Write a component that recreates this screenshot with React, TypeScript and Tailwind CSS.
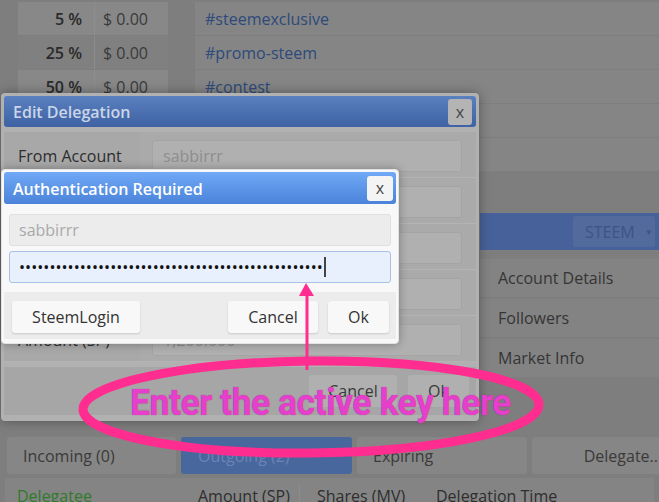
const font = "font-['Open_Sans','Liberation_Sans',sans-serif]"

const rates = [
  { pct: "5 %", value: "$ 0.00" },
  { pct: "25 %", value: "$ 0.00" },
  { pct: "50 %", value: "$ 0.00" },
  { pct: "75 %", value: "$ 0.00" },
  { pct: "100 %", value: "$ 0.00" }
]

const tags = ["#steemexclusive", "#promo-steem", "#contest", "", ""]

const menu = ["Account Details", "Followers", "Market Info"]

function Page() {
  return (
    <div className="flex flex-col h-full">
      {/* top: rates table and tag list */}
      <div className="flex shrink-0 h-[212px] pt-[2px]">
        <div className="w-[175px] pl-[18px] pr-[7px] flex flex-col gap-[1px]">
          {rates.map((r, i) => (
            <div
              key={r.pct}
              className={`flex h-[33px] shrink-0 items-center ${i % 2 === 0 ? "bg-[#888888]" : "bg-[#808080]"}`}>
              <div className="w-[77px] pr-[12px] text-right font-semibold text-[16px] text-[#2a2a2a] border-r border-[#8d8d8d] h-full flex items-center justify-end">
                {r.pct}
              </div>
              <div className="pl-[8px] text-[16px] text-[#3a3a3a]">{r.value}</div>
            </div>
          ))}
        </div>
        <div className="flex-1 pl-[20px] flex flex-col gap-[1px]">
          {tags.map((t, i) => (
            <div
              key={i}
              className="h-[33px] shrink-0 bg-[#858585] flex items-center pl-[10px] text-[16px] text-[#2d4a7a]">
              {t}
            </div>
          ))}
        </div>
      </div>

      {/* middle: right hand panel */}
      <div className="flex shrink-0 h-[225px]">
        <div className="w-[480px]" />
        <div className="flex-1 flex flex-col">
          <div className="mt-[1px] shrink-0 h-[37px] bg-[#47629a] flex items-center justify-end pr-[4px]">
            <div className="h-[31px] w-[82px] rounded-[3px] bg-[#536a9d] flex items-center pl-[12px] gap-[10px] text-[16px] text-[#3c5585]">
              STEEM <span className="text-[8px]">▼</span>
            </div>
          </div>
          <div className="mt-[9px] flex flex-col gap-[2px]">
            {menu.map((m) => (
              <div
                key={m}
                className="h-[38px] shrink-0 bg-[#838383] flex items-center pl-[18px] text-[16px] text-[#353535]">
                {m}
              </div>
            ))}
          </div>
        </div>
      </div>

      {/* tabs */}
      <div className="flex shrink-0 gap-[5px] pl-[7px] h-[37px]">
        <div className="w-[169px] rounded-[3px] bg-[#868686] flex items-center pl-[16px] pt-[1px] text-[16px] text-[#3a3a3a]">
          Incoming (0)
        </div>
        <div className="w-[171px] rounded-[3px] bg-[#48679c] flex items-center pl-[17px] pt-[1px] text-[16px] text-[#6c84b6]">
          Outgoing (2)
        </div>
        <div className="w-[170px] rounded-[3px] bg-[#868686] flex items-center pl-[16px] pt-[1px] text-[16px] text-[#3a3a3a]">
          Expiring
        </div>
        <div className="flex-1 rounded-l-[3px] bg-[#868686] flex items-center justify-end pr-[1px] pt-[1px] text-[16px] text-[#3a3a3a] whitespace-nowrap overflow-hidden">
          Delegate..
        </div>
      </div>

      {/* table header */}
      <div className="mt-[4px] mx-[5px] flex-1 min-h-0 overflow-hidden bg-[#848484] flex items-start pt-[6px] text-[16px] text-[#2e2e2e]">
        <div className="w-[188px] pl-[12px] text-[#2f7b2b]">Delegatee</div>
        <div className="w-[107px] pl-[5px] border-r border-[#8c8c8c]">Amount (SP)</div>
        <div className="w-[119px] pl-[17px]">Shares (MV)</div>
        <div className="flex-1 pl-[17px]">Delegation Time</div>
      </div>
    </div>
  )
}

function EditDelegation() {
  const rows = [
    { label: "From Account", value: "sabbirrr" },
    { label: "To Account", value: "" },
    { label: "", value: "" },
    { label: "", value: "" },
    { label: "Amount (SP)", value: "1,200.000" }
  ]
  return (
    <div className="absolute left-[1px] top-[93px] w-[478px] h-[328px] rounded-[4px] bg-[#b1b1b1] p-[3px] shadow-[0_0_12px_rgba(0,0,0,0.35)] flex flex-col">
      <div className="h-[31px] shrink-0 rounded-[3px] bg-linear-to-b from-[#5b80bf] to-[#3e62a3] flex items-center justify-between pl-[9px] pr-[4px]">
        <span className="pt-[1px] text-[16px] font-semibold text-[#cbd5e8]">Edit Delegation</span>
        <div className="w-[24px] h-[26px] rounded-[3px] bg-[#b4b4b4] flex items-center justify-center text-[16px] text-[#444]">
          x
        </div>
      </div>
      <div className="mt-[5px] flex flex-col">
        {rows.map((r, i) => (
          <div key={i} className="h-[46px] shrink-0 flex border-b border-[#b4b4b4] bg-[#aaaaaa]">
            <div className="w-[136px] flex items-center pl-[14px] pt-[3px] text-[16px] text-[#2d2d2d] bg-[#a8a8a8]">
              {r.label}
            </div>
            <div className="flex-1 pl-[12px] pr-[14px] pt-[8px]">
              <div className="h-[32px] rounded-[3px] bg-[#b0b0b0] border border-[#a4a4a4] flex items-center pl-[10px] text-[16px] text-[#8d8d8d]">
                {r.value}
              </div>
            </div>
          </div>
        ))}
      </div>
      <div className="mt-[5px] h-[48px] shrink-0 bg-[#a6a6a6] flex items-center justify-end gap-[11px] pr-[7px]">
        <div className="w-[88px] h-[32px] rounded-[3px] bg-[#b0b0b0] flex items-center justify-center text-[16px] text-[#3a3a3a]">
          Cancel
        </div>
        <div className="w-[61px] h-[32px] rounded-[3px] bg-[#b0b0b0] flex items-center justify-center text-[16px] text-[#3a3a3a]">
          Ok
        </div>
      </div>
    </div>
  )
}

function AuthDialog() {
  return (
    <div className="absolute left-[1px] top-[169px] w-[398px] h-[175px] rounded-[4px] bg-[#f8f8f8] border border-[#e2e2e2] p-[2px] shadow-[0_0_10px_rgba(0,0,0,0.3)] flex flex-col">
      <div className="h-[32px] shrink-0 rounded-[3px] bg-linear-to-b from-[#70a9f6] to-[#4a83d9] flex items-center justify-between pl-[9px] pr-[3px]">
        <span className="pt-[1px] text-[16px] font-semibold text-white">Authentication Required</span>
        <div className="w-[26px] h-[25px] rounded-[3px] bg-[#f4f4f4] flex items-center justify-center text-[16px] text-[#444]">
          x
        </div>
      </div>
      <div className="px-[5px] pt-[10px] flex flex-col gap-[5px]">
        <div className="h-[32px] shrink-0 rounded-[3px] bg-[#ececec] border border-[#e0e0e0] flex items-center pl-[9px] text-[16px] text-[#a9a9a9]">
          sabbirrr
        </div>
        <div className="h-[32px] shrink-0 rounded-[3px] bg-[#e8f0fd] border border-[#a9c1e4] flex items-center pl-[9px] text-[16px] text-[#111]">
          <span className="tracking-[0.06px]">{"•".repeat(50)}</span>
          <span className="w-[2px] h-[20px] bg-[#444] ml-[1px]" />
        </div>
      </div>
      <div className="mt-[9px] h-[47px] shrink-0 bg-[#ececec] flex items-start pt-[9px] pl-[8px] pr-[7px]">
        <div className="w-[128px] h-[32px] rounded-[3px] bg-[#f8f8f8] shadow-[0_1px_2px_rgba(0,0,0,0.15)] flex items-center justify-center text-[16px] text-[#333]">
          SteemLogin
        </div>
        <div className="flex-1" />
        <div className="w-[90px] h-[32px] rounded-[3px] bg-[#f8f8f8] shadow-[0_1px_2px_rgba(0,0,0,0.15)] flex items-center justify-center text-[16px] text-[#333]">
          Cancel
        </div>
        <div className="ml-[10px] w-[61px] h-[32px] rounded-[3px] bg-[#f8f8f8] shadow-[0_1px_2px_rgba(0,0,0,0.15)] flex items-center justify-center text-[16px] text-[#333]">
          Ok
        </div>
      </div>
    </div>
  )
}

function Annotation() {
  return (
    <>
      <svg className="absolute left-0 top-0 pointer-events-none" width="659" height="502" viewBox="0 0 659 502">
        <ellipse cx="311" cy="407" rx="228" ry="46" fill="none" stroke="#ff2d8f" strokeWidth="9" transform="rotate(-0.6 311 407)" />
        <line x1="307" y1="370" x2="307" y2="292" stroke="#ff2d8f" strokeWidth="3" />
        <polygon points="306,283 299,296 314,296" fill="#ff2d8f" />
      </svg>
      <div className="absolute left-[130px] top-[384px] origin-left scale-x-[0.96] whitespace-nowrap font-['Roboto',sans-serif] font-bold text-[37px] leading-none tracking-[-0.5px] text-[#e63fcc] [text-shadow:0_0_1px_rgba(120,0,90,0.6)]">
        Enter the active key here
      </div>
    </>
  )
}

export default function App() {
  return (
    <div className={`relative w-[659px] h-[502px] overflow-hidden bg-[#7e7e7e] ${font}`}>
      <Page />
      <EditDelegation />
      <AuthDialog />
      <Annotation />
    </div>
  )
}
